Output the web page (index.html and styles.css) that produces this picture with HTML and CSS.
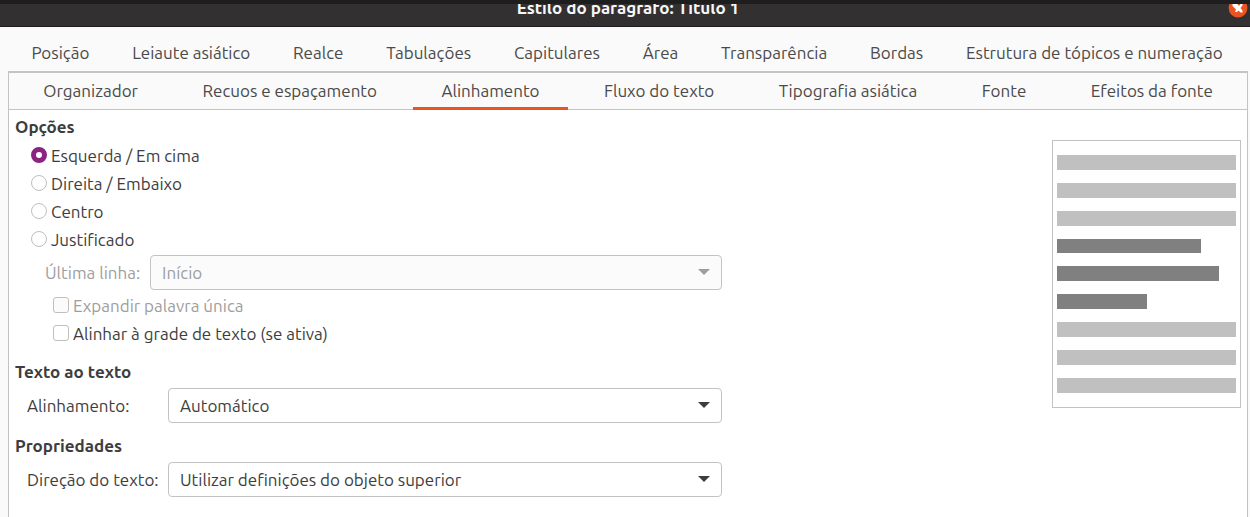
FILE: index.html
```html
<!DOCTYPE html>
<html lang="pt-BR">
<head>
<meta charset="utf-8">
<title>Estilo do parágrafo: Título 1</title>
<link rel="stylesheet" href="styles.css">
</head>
<body>
<header class="titlebar">
  <h1 class="title">Estilo do parágrafo: Título 1</h1>
  <button class="close" type="button" aria-label="Fechar">
    <svg viewBox="0 0 20 20" width="20" height="20" aria-hidden="true"><circle cx="10" cy="10" r="9.400" fill="#e95420"/><path d="M4.500 5v3l3.500 3.500-1 2.500h2l1.500-1.500 2 2h2v-2l-2-2.500 2-2.500V6h-2l-1.500 2L8.500 5z" fill="#fff"/></svg>
  </button>
</header>
<main class="dialog">
  <nav class="tabs tabs-back" aria-label="Guias">
    <button class="tab" type="button">Posição</button>
    <button class="tab" type="button">Leiaute asiático</button>
    <button class="tab" type="button">Realce</button>
    <button class="tab" type="button">Tabulações</button>
    <button class="tab" type="button">Capitulares</button>
    <button class="tab" type="button">Área</button>
    <button class="tab" type="button">Transparência</button>
    <button class="tab" type="button">Bordas</button>
    <button class="tab" type="button">Estrutura de tópicos e numeração</button>
  </nav>
  <div class="notebook">
    <nav class="tabs tabs-front" aria-label="Guias principais">
      <button class="tab" type="button">Organizador</button>
      <button class="tab" type="button">Recuos e espaçamento</button>
      <button class="tab active" type="button">Alinhamento</button>
      <button class="tab" type="button">Fluxo do texto</button>
      <button class="tab" type="button">Tipografia asiática</button>
      <button class="tab" type="button">Fonte</button>
      <button class="tab" type="button">Efeitos da fonte</button>
    </nav>
    <div class="page">
      <form class="form">
        <section class="options">
          <h2 class="heading">Opções</h2>
          <div class="radios">
            <label class="choice"><input class="radio" type="radio" name="align" checked>Esquerda / Em cima</label>
            <label class="choice"><input class="radio" type="radio" name="align">Direita / Embaixo</label>
            <label class="choice"><input class="radio" type="radio" name="align">Centro</label>
            <label class="choice"><input class="radio" type="radio" name="align">Justificado</label>
          </div>
          <div class="last-line">
            <label class="label disabled" for="last">Última linha:</label>
            <div class="combo disabled">
              <select class="select" id="last" disabled><option>Início</option></select>
              <svg class="arrow" viewBox="0 0 12 6" width="12" height="6" aria-hidden="true"><path d="M0 0h12L6 6z" fill="currentColor"/></svg>
            </div>
          </div>
          <div class="checks">
            <label class="choice disabled"><input class="check" type="checkbox" disabled>Expandir palavra única</label>
            <label class="choice"><input class="check" type="checkbox">Alinhar à grade de texto (se ativa)</label>
          </div>
        </section>
        <section>
          <h2 class="heading">Texto ao texto</h2>
          <div class="field">
            <label class="label" for="valign">Alinhamento:</label>
            <div class="combo">
              <select class="select" id="valign"><option>Automático</option></select>
              <svg class="arrow" viewBox="0 0 12 6" width="12" height="6" aria-hidden="true"><path d="M0 0h12L6 6z" fill="currentColor"/></svg>
            </div>
          </div>
        </section>
        <section>
          <h2 class="heading">Propriedades</h2>
          <div class="field">
            <label class="label" for="direction">Direção do texto:</label>
            <div class="combo">
              <select class="select" id="direction"><option>Utilizar definições do objeto superior</option></select>
              <svg class="arrow" viewBox="0 0 12 6" width="12" height="6" aria-hidden="true"><path d="M0 0h12L6 6z" fill="currentColor"/></svg>
            </div>
          </div>
        </section>
      </form>
      <div class="preview" role="img" aria-label="Visualização">
        <span class="line"></span>
        <span class="line"></span>
        <span class="line"></span>
        <span class="line dark first" style="width:80.5%"></span>
        <span class="line dark" style="width:90.5%"></span>
        <span class="line dark" style="width:50.3%"></span>
        <span class="line"></span>
        <span class="line"></span>
        <span class="line"></span>
      </div>
    </div>
  </div>
</main>
</body>
</html>
```
FILE: styles.css
```css
* { box-sizing: border-box; }

body {
  margin: 0;
  min-height: 100vh;
  display: flex;
  flex-direction: column;
  background: #fafafa;
  color: #3d3d3d;
  font: 17px/24px Ubuntu, "Noto Sans", sans-serif;
}

button, select { font: inherit; color: inherit; }

.titlebar {
  display: grid;
  grid-template-columns: 28px 1fr 22px;
  align-content: end;
  align-items: end;
  height: 27px;
  padding-bottom: 6px;
  overflow: hidden;
  border-top: 4px solid #1e1e1e;
  border-bottom: 1px solid #1f1d1e;
  background: #333031;
}

.title {
  grid-column: 2;
  margin: 0;
  color: #f7f7f7;
  font-size: 17px;
  text-align: center;
}

.close {
  display: flex;
  width: 20px;
  height: 22px;
  padding: 0;
  border: 0;
  background: none;
}

.dialog {
  flex: 1;
  display: flex;
  flex-direction: column;
  padding: 7px 2px 0 8px;
}

.tabs { display: flex; }

.tab {
  flex: 1 1 auto;
  padding: 0;
  border: 0;
  background: none;
  color: #4a4a4a;
  white-space: nowrap;
}

.tabs-back {
  height: 37px;
  padding: 0 4px 0 2px;
}

.notebook {
  flex: 1;
  border: 1px solid #c3c3c2;
  border-top-width: 2px;
  border-bottom: 0;
  background: #fff;
  display: flex;
  flex-direction: column;
}

.tabs-front {
  gap: 8px;
  height: 37px;
  padding: 0 6px;
  background: linear-gradient(#c3c3c2, #c3c3c2) bottom / 100% 1px no-repeat #fafafa;
}

.tabs-front .tab {
  padding-top: 2px;
  border-bottom: 3px solid transparent;
}

.tabs-front .active { border-bottom-color: #e95420; }

.page {
  display: flex;
  justify-content: space-between;
  align-items: flex-start;
  gap: 24px;
  padding: 6px 6px 20px;
}

.form {
  flex: 1;
  max-width: 707px;
  display: flex;
  flex-direction: column;
  gap: 12px;
}

.heading {
  margin: 0;
  font-size: 17px;
  line-height: 22px;
}

.radios {
  display: flex;
  flex-direction: column;
  padding: 4px 0 0 16px;
}

.choice {
  display: flex;
  align-items: center;
  gap: 4px;
  line-height: 28px;
}

.radio, .check {
  appearance: none;
  width: 16px;
  height: 16px;
  margin: 0 0 2px;
  border: 1px solid #bfbfbf;
  background: #fff;
}

.radio { border-radius: 50%; }

.radio:checked {
  border: 5px solid #8a2480;
  background: #fff;
}

.check { border-radius: 3px; }

.disabled { color: #9e9e9e; }

.disabled .check { background: #fbfbfb; }

.last-line {
  display: flex;
  align-items: center;
  gap: 10px;
  padding: 1px 0 2px 30px;
}

.checks {
  display: flex;
  flex-direction: column;
  padding: 0 0 1px 38px;
}

.label { white-space: nowrap; }

.field {
  display: grid;
  grid-template-columns: 135px 1fr;
  align-items: center;
  gap: 6px;
  padding: 5px 0 0 12px;
}

.combo {
  position: relative;
  flex: 1;
}

.select {
  appearance: none;
  display: block;
  width: 100%;
  height: 35px;
  padding: 0 32px 0 11px;
  border: 1px solid #c3c3c2;
  border-radius: 4px;
  background: #fff;
  opacity: 1;
}

.disabled .select { background: #fbfbfb; }

.arrow {
  position: absolute;
  right: 12px;
  top: 14px;
  pointer-events: none;
}

.preview {
  display: flex;
  flex-direction: column;
  gap: 13px;
  width: 189px;
  margin-top: 24px;
  padding: 14px 4px;
  border: 1px solid #c3c3c2;
}

.line {
  height: 15px;
  background: #c0c0c0;
}

.dark { background: #808080; }

.first { height: 14px; }
```
